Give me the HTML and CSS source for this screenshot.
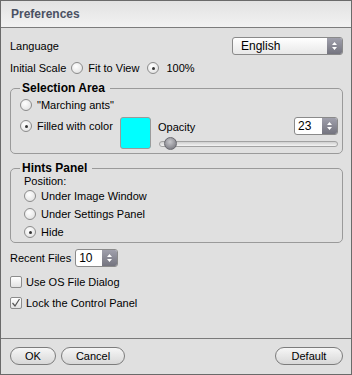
FILE: index.html
```html
<!DOCTYPE html>
<html>
<head>
<meta charset="utf-8">
<link rel="stylesheet" href="styles.css">
</head>
<body>
<div class="window">
  <div class="titlebar">Preferences</div>
  <div class="content">
    <div class="row lang-row">
      <span>Language</span>
      <div class="select">
        <span class="select-text">English</span>
        <span class="spin-btn">
          <svg width="7" height="10" viewBox="0 0 7 10"><path d="M3.5 1 L6 4 L1 4 Z M1 6 L6 6 L3.5 9 Z" fill="#fff"/></svg>
        </span>
      </div>
    </div>
    <div class="row scale-row">
      <span>Initial Scale</span>
      <span class="radio scale-r1"></span><span>Fit to View</span>
      <span class="radio on scale-r2"></span><span>100%</span>
    </div>

    <fieldset class="group sel">
      <legend>Selection Area</legend>
      <div class="row opt-row"><span class="radio"></span><span>"Marching ants"</span></div>
      <div class="fill-row">
        <div class="fill-left"><span class="radio on"></span><span>Filled with color</span></div>
        <div class="swatch"></div>
        <div class="opacity">
          <div class="opacity-top">
            <span class="opacity-label">Opacity</span>
            <div class="spin wide">
              <span class="spin-text">23</span>
              <span class="spin-btn">
                <svg width="7" height="10" viewBox="0 0 7 10"><path d="M3.5 1 L6 4 L1 4 Z M1 6 L6 6 L3.5 9 Z" fill="#fff"/></svg>
              </span>
            </div>
          </div>
          <div class="slider">
            <div class="track"></div>
            <div class="thumb"></div>
          </div>
        </div>
      </div>
    </fieldset>

    <fieldset class="group hints">
      <legend>Hints Panel</legend>
      <div class="pos-label">Position:</div>
      <div class="row hint-row"><span class="radio"></span><span>Under Image Window</span></div>
      <div class="row hint-row"><span class="radio"></span><span>Under Settings Panel</span></div>
      <div class="row hint-row"><span class="radio on"></span><span>Hide</span></div>
    </fieldset>

    <div class="row recent-row">
      <span>Recent Files</span>
      <div class="spin small">
        <span class="spin-text">10</span>
        <span class="spin-btn">
          <svg width="7" height="10" viewBox="0 0 7 10"><path d="M3.5 1 L6 4 L1 4 Z M1 6 L6 6 L3.5 9 Z" fill="#fff"/></svg>
        </span>
      </div>
    </div>
    <div class="row check-row first"><span class="check"></span><span>Use OS File Dialog</span></div>
    <div class="row check-row second"><span class="check">
      <svg width="10" height="10" viewBox="0 0 10 10"><path d="M1.5 5 L4 8 L8.5 1" fill="none" stroke="#555" stroke-width="1.2"/></svg>
    </span><span>Lock the Control Panel</span></div>
  </div>
  <div class="footer">
    <button class="btn ok">OK</button>
    <button class="btn cancel">Cancel</button>
    <span class="spacer"></span>
    <button class="btn def">Default</button>
  </div>
</div>
</body>
</html>
```

FILE: styles.css
```css
* { box-sizing: border-box; }
html, body { margin: 0; padding: 0; }
body {
  font-family: "Liberation Sans", Arial, sans-serif;
  font-size: 11px;
  color: #000;
  background: #e0e0e0;
}
.window {
  width: 352px;
  height: 375px;
  border: 1px solid #6a6a6a;
  background: #e0e0e0;
  display: flex;
  flex-direction: column;
}
.titlebar {
  height: 27px;
  flex: none;
  border-bottom: 1px solid #7c7c7c;
  background: linear-gradient(#e2e2e2, #f2f2f2);
  padding-left: 10px;
  font-weight: bold;
  font-size: 12px;
  line-height: 26px;
  color: #4a5163;
}
.content {
  flex: 1;
  padding: 9px 8px 0 9px;
  display: flex;
  flex-direction: column;
}
.row {
  display: flex;
  align-items: center;
}
.lang-row {
  height: 18px;
  justify-content: space-between;
}
.select {
  width: 111px;
  height: 18px;
  border: 1px solid #8a8a8a;
  border-radius: 3px;
  background: linear-gradient(#ffffff, #e8e8e8);
  display: flex;
  overflow: hidden;
}
.select-text {
  flex: 1;
  padding-left: 8px;
  line-height: 16px;
  font-size: 12px;
}
.spin-btn {
  width: 15px;
  background: linear-gradient(#a0a0ac, #74747f);
  display: flex;
  align-items: center;
  justify-content: center;
}
.scale-row {
  height: 18px;
  margin-top: 4px;
}
.radio {
  width: 12px;
  height: 12px;
  border-radius: 50%;
  border: 1px solid #8c8c8c;
  background: radial-gradient(circle at 40% 35%, #ffffff, #dcdcdc);
  flex: none;
  margin-right: 5px;
  position: relative;
}
.radio.on::after {
  content: "";
  position: absolute;
  left: 4px;
  top: 4px;
  width: 3px;
  height: 3px;
  border-radius: 50%;
  background: #333;
}
.scale-r1 { margin-left: 5px; }
.scale-r2 { margin-left: 8px; margin-right: 7px; }

.group {
  margin: 4px 0 0 0;
  border: 1px solid #9a9a9a;
  border-radius: 5px;
  min-width: 0;
}
.group legend {
  font-weight: bold;
  font-size: 12px;
  line-height: 14px;
  padding: 0 5px 0 2px;
}
.sel {
  padding: 2px 4px 3px 9px;
}
.opt-row { height: 16px; }
.fill-row {
  display: flex;
  margin-top: 4px;
}
.fill-left {
  width: 100px;
  height: 18px;
  display: flex;
  align-items: center;
}
.swatch {
  width: 31px;
  height: 32px;
  background: #00ffff;
  border: 1px solid #9a9a9a;
  border-radius: 3px;
}
.opacity {
  flex: 1;
  margin-left: 7px;
  display: flex;
  flex-direction: column;
}
.opacity-top {
  display: flex;
  justify-content: space-between;
  align-items: center;
  height: 18px;
}
.opacity-label { padding-top: 2px; }
.spin {
  height: 18px;
  border: 1px solid #8a8a8a;
  border-radius: 3px;
  display: flex;
  overflow: hidden;
  background: #fff;
}
.spin.wide { width: 44px; }
.spin.small { width: 43px; margin-left: 4px; }
.spin-text {
  flex: 1;
  padding-left: 3px;
  line-height: 16px;
  font-size: 12px;
}
.slider {
  position: relative;
  height: 13px;
  margin-top: 2px;
  margin-left: 1px;
  display: flex;
  align-items: center;
}
.track {
  flex: 1;
  height: 6px;
  border: 1px solid #a2a2a2;
  border-radius: 3px;
  background: linear-gradient(#d0d0d0, #f4f4f4);
}
.thumb {
  position: absolute;
  left: 5px;
  top: 0;
  width: 13px;
  height: 13px;
  border-radius: 50%;
  background: radial-gradient(circle at 45% 35%, #c8c8cc, #6c6c74);
  border: 1px solid #6a6a70;
}
.hints {
  margin-top: 7px;
  padding: 0 4px 1px 13px;
}
.hints legend { margin-left: -4px; }
.pos-label {
  height: 12px;
  line-height: 12px;
}
.hint-row { height: 18px; }
.recent-row {
  height: 18px;
  margin-top: 6px;
}
.check-row { height: 18px; }
.check-row.first { margin-top: 6px; }
.check-row.second { margin-top: 3px; }
.check {
  width: 12px;
  height: 12px;
  border: 1px solid #8c8c8c;
  border-radius: 2px;
  background: linear-gradient(#ffffff, #e2e2e2);
  margin-right: 4px;
  display: flex;
  align-items: center;
  justify-content: center;
  flex: none;
}
.footer {
  flex: none;
  height: 36px;
  border-top: 1px solid #7a7a7a;
  padding: 8px 8px 9px 9px;
  display: flex;
}
.spacer { flex: 1; }
.btn {
  height: 18px;
  border: 1px solid #7c7c7c;
  border-radius: 9px;
  background: linear-gradient(#f6f6f6, #d8d8d8);
  font-family: "Liberation Sans", Arial, sans-serif;
  font-size: 11px;
  color: #000;
  padding: 0;
}
.btn.ok { width: 46px; }
.btn.cancel { width: 64px; margin-left: 5px; }
.btn.def { width: 68px; }
```
